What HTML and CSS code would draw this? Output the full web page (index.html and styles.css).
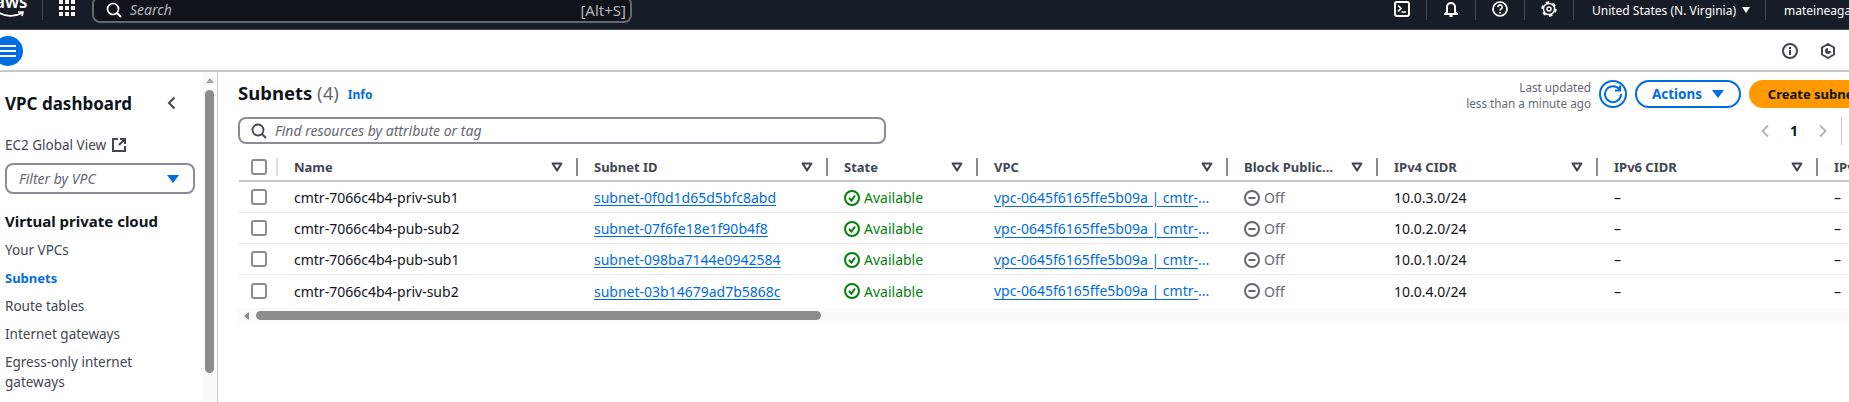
FILE: index.html
```html
<!DOCTYPE html>
<html>
<head>
	<title>Subnets | VPC Console</title>
	<meta charset="utf-8">
	<link rel="stylesheet" href="styles.css">
</head>
<body>
	<svg class="sprites" width="0" height="0">
		<symbol id="sort" viewBox="0 0 16 16"><path d="M3 4h10l-5 8z" fill="none" stroke="currentColor" stroke-width="2.4" stroke-linejoin="round"/></symbol>
		<symbol id="ok" viewBox="0 0 16 16"><circle cx="8" cy="8" r="7" fill="none" stroke="currentColor" stroke-width="2"/><path d="M5 8l2.4 2.6L11 5.5" fill="none" stroke="currentColor" stroke-width="2"/></symbol>
		<symbol id="off" viewBox="0 0 16 16"><circle cx="8" cy="8" r="7" fill="none" stroke="currentColor" stroke-width="2"/><path d="M4.5 8h7" fill="none" stroke="currentColor" stroke-width="2"/></symbol>
	</svg>

	<header class="topnav">
		<div class="logo">
			<span class="logo-text">aws</span>
			<svg class="logo-smile" width="30" height="8" viewBox="0 0 30 8"><path d="M2 1c7 5 17 5 24 1M22 1l5 0-1 4" fill="none" stroke="#fff" stroke-width="1.6"/></svg>
		</div>
		<div class="nav-sep nav-sep-logo"></div>
		<svg class="apps" width="16" height="16" viewBox="0 0 16 16" fill="#fff"><rect width="4" height="4"/><rect x="6" width="4" height="4"/><rect x="12" width="4" height="4"/><rect y="6" width="4" height="4"/><rect x="6" y="6" width="4" height="4"/><rect x="12" y="6" width="4" height="4"/><rect y="12" width="4" height="4"/><rect x="6" y="12" width="4" height="4"/><rect x="12" y="12" width="4" height="4"/></svg>
		<div class="global-search">
			<svg width="16" height="16" viewBox="0 0 16 16"><circle cx="7" cy="7" r="5.5" fill="none" stroke="#fff" stroke-width="1.7"/><path d="M11 11l4 4" stroke="#fff" stroke-width="2"/></svg>
			<span class="global-search-hint">Search</span>
			<span class="global-search-key">[Alt+S]</span>
		</div>
		<div class="nav-right">
			<div class="nav-item nav-icon">
				<svg width="16" height="16" viewBox="0 0 16 16"><rect x="1" y="1" width="14" height="14" rx="2" fill="none" stroke="#fff" stroke-width="2"/><path d="M4 4.5L7 7.5 4 10.5M7.5 11H12" fill="none" stroke="#fff" stroke-width="1.7"/></svg>
			</div>
			<div class="nav-item nav-icon">
				<svg width="16" height="16" viewBox="0 0 16 16"><path d="M4 11V6a4 4 0 018 0v5l2 2H2z" fill="none" stroke="#fff" stroke-width="2" stroke-linejoin="round"/><path d="M6.5 15h3" stroke="#fff" stroke-width="2"/></svg>
			</div>
			<div class="nav-item nav-icon">
				<svg width="16" height="16" viewBox="0 0 16 16"><circle cx="8" cy="8" r="7" fill="none" stroke="#fff" stroke-width="1.7"/><path d="M5.8 6.2a2.2 2.2 0 114 1.2c-.7.7-1.8 1-1.8 2.2" fill="none" stroke="#fff" stroke-width="1.6"/><rect x="7.2" y="11" width="1.6" height="1.6" fill="#fff"/></svg>
			</div>
			<div class="nav-item nav-icon">
				<svg width="16" height="16" viewBox="0 0 16 16"><circle cx="8" cy="8" r="5.6" fill="none" stroke="#fff" stroke-width="1.5"/><circle cx="8" cy="8" r="6.9" fill="none" stroke="#fff" stroke-width="1.6" stroke-dasharray="3.6 3.62"/><circle cx="8" cy="8" r="2" fill="none" stroke="#fff" stroke-width="1.5"/></svg>
			</div>
			<div class="nav-item nav-region">United States (N. Virginia)<span class="caret-small"></span></div>
			<div class="nav-item nav-user">mateineagabriel</div>
		</div>
	</header>

	<div class="subbar">
		<div class="menu-btn">
			<svg width="16" height="14" viewBox="0 0 16 14" fill="#fff"><rect y="1" width="16" height="2"/><rect y="6" width="16" height="2"/><rect y="11" width="16" height="2"/></svg>
		</div>
		<div class="subbar-right">
			<svg width="16" height="16" viewBox="0 0 16 16"><circle cx="8" cy="8" r="7" fill="none" stroke="#424650" stroke-width="2"/><rect x="7" y="7" width="2" height="5" fill="#424650"/><rect x="7" y="4" width="2" height="2" fill="#424650"/></svg>
			<svg width="16" height="16" viewBox="0 0 16 16"><path d="M8 1l6 3.5v7L8 15l-6-3.500v-7z" fill="none" stroke="#424650" stroke-width="2" stroke-linejoin="round"/><path d="M8 5a3 3 0 103 3H8z" fill="#424650"/></svg>
		</div>
	</div>

	<div class="layout">
		<nav class="sidebar">
			<div class="sidebar-scroll">
				<div class="side-head">
					<span>VPC dashboard</span>
					<svg width="16" height="16" viewBox="0 0 16 16"><path d="M10.5 2.5L5 8l5.5 5.5" fill="none" stroke="#424650" stroke-width="2"/></svg>
				</div>
				<div class="side-ec2">
					EC2 Global View
					<svg width="14" height="14" viewBox="0 0 14 14"><path d="M6 1H1v12h12V8M8 1h5v5M13 1L7 7" fill="none" stroke="#424650" stroke-width="2"/></svg>
				</div>
				<div class="side-filter">
					<span>Filter by VPC</span>
					<span class="caret-blue"></span>
				</div>
				<div class="side-section">Virtual private cloud</div>
				<a class="side-link">Your VPCs</a>
				<a class="side-link side-active">Subnets</a>
				<a class="side-link">Route tables</a>
				<a class="side-link">Internet gateways</a>
				<a class="side-link">Egress-only internet gateways</a>
			</div>
			<div class="side-scrollbar">
				<span class="side-scroll-up"></span>
				<span class="side-scroll-thumb"></span>
			</div>
		</nav>

		<main class="content">
			<div class="title-row">
				<h1 class="page-title">Subnets <span class="count">(4)</span></h1>
				<a class="info-link">Info</a>
				<div class="actions">
					<div class="last-updated">Last updated<br>less than a minute ago</div>
					<div class="refresh-btn">
						<svg width="20" height="20" viewBox="0 0 20 20"><path d="M16.5 5.5A8 8 0 1018 10" fill="none" stroke="#006ce0" stroke-width="2"/><path d="M17 1.5V6.5H12" fill="none" stroke="#006ce0" stroke-width="2"/></svg>
					</div>
					<div class="btn btn-normal">Actions<span class="caret-blue"></span></div>
					<div class="btn btn-primary">Create subnet</div>
				</div>
			</div>

			<div class="filter-row">
				<div class="find-box">
					<svg width="16" height="16" viewBox="0 0 16 16"><circle cx="7" cy="7" r="5.5" fill="none" stroke="#424650" stroke-width="1.8"/><path d="M11 11l4 4" stroke="#424650" stroke-width="2"/></svg>
					<span>Find resources by attribute or tag</span>
				</div>
				<div class="pager">
					<svg width="14" height="14" viewBox="0 0 14 14"><path d="M9 1.5L3.5 7 9 12.5" fill="none" stroke="#b4b4bb" stroke-width="2"/></svg>
					<span class="pager-num">1</span>
					<svg width="14" height="14" viewBox="0 0 14 14"><path d="M5 1.5L10.5 7 5 12.5" fill="none" stroke="#b4b4bb" stroke-width="2"/></svg>
					<span class="pager-sep"></span>
				</div>
			</div>

			<table class="subnets" cellspacing="0">
				<colgroup>
					<col class="c-check"><col class="c-name"><col class="c-id"><col class="c-state"><col class="c-vpc"><col class="c-block"><col class="c-cidr"><col class="c-cidr"><col class="c-last">
				</colgroup>
				<thead>
					<tr>
						<th><div class="check-in"><span class="checkbox"></span></div></th>
						<th><div class="th-in"><span class="th-label">Name</span><svg class="sort"><use href="#sort"/></svg></div></th>
						<th><div class="th-in"><span class="th-label">Subnet ID</span><svg class="sort"><use href="#sort"/></svg></div></th>
						<th><div class="th-in"><span class="th-label">State</span><svg class="sort"><use href="#sort"/></svg></div></th>
						<th><div class="th-in"><span class="th-label">VPC</span><svg class="sort"><use href="#sort"/></svg></div></th>
						<th><div class="th-in"><span class="th-label">Block Public...</span><svg class="sort"><use href="#sort"/></svg></div></th>
						<th><div class="th-in"><span class="th-label">IPv4 CIDR</span><svg class="sort"><use href="#sort"/></svg></div></th>
						<th><div class="th-in"><span class="th-label">IPv6 CIDR</span><svg class="sort"><use href="#sort"/></svg></div></th>
						<th><div class="th-in"><span class="th-label">IPv6 CIDR</span></div></th>
					</tr>
				</thead>
				<tbody>
					<tr>
						<td class="check-cell"><span class="checkbox"></span></td>
						<td>cmtr-7066c4b4-priv-sub1</td>
						<td><a class="link">subnet-0f0d1d65d5bfc8abd</a></td>
						<td><span class="status status-ok"><svg><use href="#ok"/></svg>Available</span></td>
						<td><span class="vpc-cell"><a class="link-vpc">vpc-0645f6165ffe5b09a | cmtr-</a>...</span></td>
						<td><span class="status status-off"><svg><use href="#off"/></svg>Off</span></td>
						<td>10.0.3.0/24</td>
						<td>–</td>
						<td>–</td>
					</tr>
					<tr>
						<td class="check-cell"><span class="checkbox"></span></td>
						<td>cmtr-7066c4b4-pub-sub2</td>
						<td><a class="link">subnet-07f6fe18e1f90b4f8</a></td>
						<td><span class="status status-ok"><svg><use href="#ok"/></svg>Available</span></td>
						<td><span class="vpc-cell"><a class="link-vpc">vpc-0645f6165ffe5b09a | cmtr-</a>...</span></td>
						<td><span class="status status-off"><svg><use href="#off"/></svg>Off</span></td>
						<td>10.0.2.0/24</td>
						<td>–</td>
						<td>–</td>
					</tr>
					<tr>
						<td class="check-cell"><span class="checkbox"></span></td>
						<td>cmtr-7066c4b4-pub-sub1</td>
						<td><a class="link">subnet-098ba7144e0942584</a></td>
						<td><span class="status status-ok"><svg><use href="#ok"/></svg>Available</span></td>
						<td><span class="vpc-cell"><a class="link-vpc">vpc-0645f6165ffe5b09a | cmtr-</a>...</span></td>
						<td><span class="status status-off"><svg><use href="#off"/></svg>Off</span></td>
						<td>10.0.1.0/24</td>
						<td>–</td>
						<td>–</td>
					</tr>
					<tr>
						<td class="check-cell"><span class="checkbox"></span></td>
						<td>cmtr-7066c4b4-priv-sub2</td>
						<td><a class="link">subnet-03b14679ad7b5868c</a></td>
						<td><span class="status status-ok"><svg><use href="#ok"/></svg>Available</span></td>
						<td><span class="vpc-cell"><a class="link-vpc">vpc-0645f6165ffe5b09a | cmtr-</a>...</span></td>
						<td><span class="status status-off"><svg><use href="#off"/></svg>Off</span></td>
						<td>10.0.4.0/24</td>
						<td>–</td>
						<td>–</td>
					</tr>
				</tbody>
			</table>

			<div class="table-scroll">
				<span class="table-scroll-left"></span>
				<span class="table-scroll-thumb"></span>
			</div>
		</main>
	</div>
</body>
</html>
```
FILE: styles.css
```css
body,html{
	margin:0;
	height:100%;
	overflow:hidden;
	background:#fff;
	font-family:"Noto Sans","Open Sans",sans-serif;
	font-size:14px;
	color:#0f141a;
}

.sprites{
	display:block;
	height:0;
}

/* top dark bar, page is scrolled a bit so things are cut at the top */
.topnav{
	display:flex;
	align-items:flex-start;
	height:29px;
	background:#161d26;
	border-bottom:1px solid #424650;
	color:#fff;
}

.logo{
	display:flex;
	flex-direction:column;
	width:29px;
	height:29px;
	overflow:hidden;
	flex:none;
}

.logo-text{
	font-size:17px;
	font-weight:600;
	line-height:20px;
	margin-top:-8px;
	margin-left:-5px;
}

.logo-smile{
	margin-top:-1px;
	margin-left:-4px;
}

.nav-sep{
	width:1px;
	background:#424650;
	height:20px;
}

.nav-sep-logo{
	margin:0 16px 0 13px;
}

.apps{
	flex:none;
}

.global-search{
	display:flex;
	align-items:center;
	box-sizing:border-box;
	width:540px;
	height:27px;
	margin:-4px 0 0 17px;
	padding:0 4px 0 12px;
	border:2px solid #656871;
	border-radius:8px;
	background:#0f141a;
}

.global-search-hint{
	margin-left:8px;
	font-style:italic;
	color:#b4b4bb;
	flex:1;
}

.global-search-key{
	font-size:15px;
	color:#b4b4bb;
}

.nav-right{
	display:flex;
	align-items:flex-start;
	margin-left:auto;
	height:29px;
	width:471px;
	flex:none;
	overflow:hidden;
}

.nav-item{
	display:flex;
	align-items:center;
	justify-content:center;
	height:20px;
	border-right:1px solid #424650;
	box-sizing:border-box;
	flex:none;
}

.nav-icon{
	width:49px;
}

.nav-icon svg{
	margin-top:-2px;
}

.nav-region{
	width:192px;
	padding-left:3px;
	font-size:12px;
	white-space:nowrap;
}

.caret-small{
	margin-left:6px;
	border-left:4px solid transparent;
	border-right:4px solid transparent;
	border-top:6px solid #fff;
}

.nav-user{
	border-right:0;
	padding-left:18px;
	font-size:12px;
	white-space:nowrap;
}

.subbar{
	display:flex;
	align-items:center;
	box-sizing:border-box;
	height:42px;
	padding-top:2px;
	border-bottom:2px solid #c6c6cd;
}

.menu-btn{
	display:flex;
	align-items:center;
	justify-content:center;
	width:30px;
	height:30px;
	border-radius:50%;
	background:#006ce0;
	margin-left:-7px;
	flex:none;
}

.subbar-right{
	display:flex;
	gap:22px;
	margin-left:auto;
	margin-right:13px;
}

.layout{
	display:flex;
	height:330px;
}

.sidebar{
	display:flex;
	flex:none;
	box-sizing:border-box;
	width:218px;
	border-right:1px solid #c6c6cd;
	overflow:hidden;
}

.sidebar-scroll{
	width:202px;
	padding-left:5px;
	box-sizing:border-box;
	flex:none;
}

.side-scrollbar{
	display:flex;
	flex-direction:column;
	align-items:center;
	width:15px;
	background:#fafafa;
	flex:none;
}

.side-scroll-up{
	margin-top:6px;
	border-left:4px solid transparent;
	border-right:4px solid transparent;
	border-bottom:5px solid #a3a3a3;
}

.side-scroll-thumb{
	width:9px;
	height:283px;
	margin-top:7px;
	border-radius:5px;
	background:#8c8c8c;
}

.side-head{
	display:flex;
	align-items:center;
	justify-content:space-between;
	margin-top:19px;
	padding-right:22px;
	height:24px;
	font-size:17px;
	font-weight:700;
}

.side-ec2{
	display:flex;
	align-items:center;
	gap:6px;
	margin-top:20px;
	height:20px;
	font-size:13.5px;
	color:#424650;
}

.side-filter{
	display:flex;
	align-items:center;
	justify-content:space-between;
	box-sizing:border-box;
	width:190px;
	height:31px;
	margin-top:8px;
	padding:0 14px 0 12px;
	border:2px solid #8c8c94;
	border-radius:8px;
	font-style:italic;
	color:#656871;
}

.caret-blue{
	border-left:6px solid transparent;
	border-right:6px solid transparent;
	border-top:8px solid #006ce0;
}

.side-section{
	margin-top:17px;
	height:21px;
	line-height:21px;
	font-size:15px;
	font-weight:700;
}

.side-link{
	display:block;
	margin-top:8px;
	max-width:175px;
	line-height:20px;
	font-size:13.5px;
	color:#424650;
}

.side-active{
	color:#006ce0;
	font-weight:700;
	font-size:13px;
}

.content{
	flex:none;
	width:1656px;
	box-sizing:border-box;
	padding-left:20px;
}

.title-row{
	display:flex;
	align-items:flex-start;
	height:28px;
	padding-top:8px;
}

.page-title{
	margin:0;
	font-size:18.5px;
	font-weight:700;
	line-height:26px;
}

.count{
	font-weight:400;
	color:#656871;
}

.info-link{
	margin:7px 0 0 9px;
	font-size:12px;
	line-height:16px;
	font-weight:700;
	color:#006ce0;
}

.actions{
	display:flex;
	align-items:center;
	margin-left:auto;
	height:28px;
}

.last-updated{
	padding-top:1px;
	text-align:right;
	font-size:11.7px;
	line-height:16px;
	color:#656871;
}

.refresh-btn{
	display:flex;
	align-items:center;
	justify-content:center;
	box-sizing:border-box;
	width:28px;
	height:28px;
	margin:0 8px;
	border:2px solid #006ce0;
	border-radius:50%;
}

.btn{
	display:flex;
	align-items:center;
	justify-content:center;
	box-sizing:border-box;
	height:28px;
	border-radius:14px;
	font-weight:700;
	white-space:nowrap;
}

.btn-normal{
	width:106px;
	gap:10px;
	border:2px solid #006ce0;
	font-size:13.5px;
	color:#006ce0;
}

.btn-primary{
	width:125px;
	margin-left:8px;
	padding-left:4px;
	background:#ff9900;
	font-size:13px;
	color:#0f141a;
}

.filter-row{
	display:flex;
	align-items:center;
	margin-top:8px;
	height:29px;
}

.find-box{
	display:flex;
	align-items:center;
	gap:8px;
	box-sizing:border-box;
	width:648px;
	height:27px;
	padding-left:11px;
	border:2px solid #8c8c94;
	border-radius:8px;
	font-style:italic;
	color:#656871;
}

.pager{
	display:flex;
	align-items:center;
	margin-left:auto;
	margin-right:32px;
}

.pager-num{
	width:42px;
	text-align:center;
	font-weight:700;
}

.pager-sep{
	width:1px;
	height:28px;
	margin-left:12px;
	background:#c6c6cd;
}

.subnets{
	table-layout:fixed;
	width:1711px;
	margin:5px 0 0 1px;
	border-collapse:separate;
}

.c-check{width:39px;}
.c-name{width:300px;}
.c-id{width:250px;}
.c-state{width:150px;}
.c-vpc{width:250px;}
.c-block{width:150px;}
.c-cidr{width:220px;}
.c-last{width:132px;}

th{
	height:32px;
	padding:4px 0 0;
	box-sizing:border-box;
	border-bottom:2px solid #c6c6cd;
	font-size:13px;
	font-weight:700;
	text-align:left;
	color:#424650;
}

.th-in{
	display:flex;
	align-items:center;
	height:18px;
	padding-left:16px;
	padding-right:12px;
	border-right:2px solid #8c8c94;
}

th:last-child .th-in{
	border-right:0;
}

.th-label{
	flex:1;
	white-space:nowrap;
}

.sort{
	width:14px;
	height:14px;
	color:#424650;
}

.check-in{
	display:flex;
	align-items:center;
	height:18px;
	padding-left:12px;
	border-right:2px solid #dedee3;
}

td{
	height:31px;
	padding:1px 0 0 16px;
	box-sizing:border-box;
	border-bottom:1px solid #e9ebed;
	white-space:nowrap;
	overflow:hidden;
}

tbody tr:last-child td{
	border-bottom:0;
}

td.check-cell{
	padding:0 0 0 12px;
}

.checkbox{
	display:block;
	box-sizing:border-box;
	width:16px;
	height:16px;
	border:2px solid #8c8c94;
	border-radius:3px;
}

.link{
	color:#006ce0;
	text-decoration:underline;
	text-underline-offset:2px;
}

.vpc-cell{
	display:block;
	color:#006ce0;
	line-height:20px;
}

.link-vpc{
	color:#006ce0;
	text-decoration:underline;
	text-underline-offset:3px;
}

.status{
	display:flex;
	align-items:center;
	gap:4px;
}

.status svg{
	width:16px;
	height:16px;
	flex:none;
}

.status-ok{
	color:#037f0c;
}

.status-off{
	color:#656871;
}

.table-scroll{
	display:flex;
	align-items:center;
	height:15px;
	margin-top:2px;
	background:#fafafa;
}

.table-scroll-left{
	margin-left:6px;
	border-top:4px solid transparent;
	border-bottom:4px solid transparent;
	border-right:5px solid #8c8c8c;
}

.table-scroll-thumb{
	width:565px;
	height:9px;
	margin-left:7px;
	border-radius:5px;
	background:#8c8c8c;
}
```
